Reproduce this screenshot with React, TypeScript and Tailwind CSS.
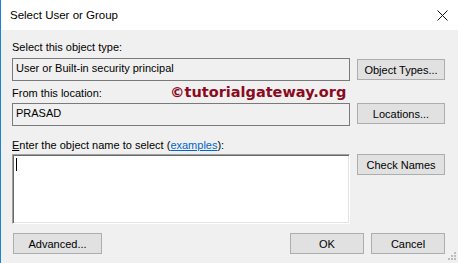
import React from "react";

function Button({ label, className = "" }: { label: React.ReactNode; className?: string }) {
  return (
    <div
      className={[
        "flex h-[21px] items-center justify-center border border-[#adadad] bg-[#e1e1e1] leading-[14px]",
        className,
      ].join(" ")}
    >
      {label}
    </div>
  );
}

export default function App() {
  return (
    <div className="relative flex h-[263px] w-[458px] flex-col overflow-hidden border-l border-[#1883d7] bg-[#f0f0f0] font-['Liberation_Sans',Arial,sans-serif] text-[11px] text-black">
      {/* title bar */}
      <div className="flex h-[30px] shrink-0 items-center justify-between bg-white pl-[9px] pr-[10px]">
        <span className="text-[11.5px] leading-[14px]">Select User or Group</span>
        <svg width="11" height="11" viewBox="0 0 11 11" className="mr-[0px]">
          <path d="M0.5 0.5 L10.5 10.5 M10.5 0.5 L0.5 10.5" stroke="#111" strokeWidth="1" fill="none" />
        </svg>
      </div>

      <div className="flex flex-1 flex-col pl-[11px] pr-[13px] pt-[10px]">
        <div className="leading-[14px]">Select this object type:</div>
        <div className="mt-[4px] flex items-center gap-[7px]">
          <div className="h-[23px] w-[338px] border border-[#7a7a7a] bg-[#f0f0f0] pl-[3px] pt-[2px] leading-[14px]">
            User or Built-in security principal
          </div>
          <Button label="Object Types..." className="w-[88px]" />
        </div>

        <div className="mt-[5px] leading-[14px]">From this location:</div>
        <div className="mt-[3px] flex items-start gap-[7px]">
          <div className="h-[23px] w-[338px] border border-[#7a7a7a] bg-[#f0f0f0] pl-[3px] pt-[2px] leading-[14px]">
            PRASAD
          </div>
          <Button label="Locations..." className="w-[88px]" />
        </div>

        <div className="mt-[12px] leading-[14px]">
          <span className="underline">E</span>nter the object name to select (
          <span className="text-[#0066cc] underline">examples</span>):
        </div>
        <div className="mt-[2px] flex items-start gap-[7px]">
          <div className="h-[70px] w-[338px] border border-t-[#a0a0a0] border-l-[#a0a0a0] border-r-white border-b-white bg-white shadow-[inset_1px_1px_0_#696969,inset_-1px_-1px_0_#e3e3e3]">
            <div className="ml-[3px] mt-[3px] h-[13px] w-px bg-black" />
          </div>
          <Button label="Check Names" className="w-[88px]" />
        </div>

        <div className="mt-[9px] flex items-center">
          <Button label="Advanced..." className="ml-px w-[89px]" />
          <div className="flex-1" />
          <Button label="OK" className="w-[74px]" />
          <Button label="Cancel" className="ml-[7px] w-[74px]" />
        </div>
      </div>

      {/* watermark */}
      <div className="absolute left-[169px] top-[84px] font-['DejaVu_Sans',Verdana,sans-serif] text-[14.5px] font-bold leading-[17px] text-[#8b0a1e]">
        ©tutorialgateway.org
      </div>

      {/* size grip */}
      <svg width="10" height="10" viewBox="0 0 10 10" className="absolute bottom-[1px] right-[2px]">
        <rect x="8" y="0" width="2" height="2" fill="#bcbcbc" />
        <rect x="5" y="3" width="2" height="2" fill="#bcbcbc" />
        <rect x="8" y="3" width="2" height="2" fill="#bcbcbc" />
        <rect x="2" y="6" width="2" height="2" fill="#bcbcbc" />
        <rect x="5" y="6" width="2" height="2" fill="#bcbcbc" />
        <rect x="8" y="6" width="2" height="2" fill="#bcbcbc" />
      </svg>
    </div>
  );
}
